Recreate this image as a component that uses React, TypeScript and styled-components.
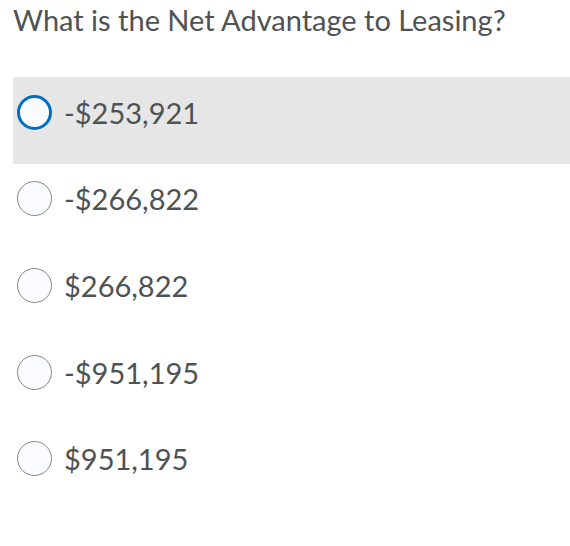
import React from "react";
import styled, { createGlobalStyle } from "styled-components";

const GlobalStyle = createGlobalStyle`
  html, body {
    margin: 0;
    padding: 0;
    background: #ffffff;
  }
  body {
    font-family: Lato, "Noto Sans", sans-serif;
    color: #494c4e;
  }
`;

const Page = styled.div`
  width: 570px;
  height: 546px;
  padding-left: 13px;
  box-sizing: border-box;
`;

const Question = styled.h1`
  margin: 0;
  font-size: 29px;
  font-weight: 400;
  line-height: 40px;
  color: #4f5254;
  white-space: nowrap;
`;

const Choices = styled.div`
  margin-top: 37px;
  display: flex;
  flex-direction: column;
`;

const Choice = styled.label<{ $active?: boolean }>`
  display: flex;
  align-items: center;
  gap: 12px;
  height: 86.6px;
  box-sizing: border-box;
  padding: 0 0 16px 4px;
  background: ${({ $active }) => ($active ? "#e6e6e6" : "transparent")};
  cursor: pointer;
`;

const Radio = styled.span<{ $focused?: boolean }>`
  width: 35px;
  height: 35px;
  box-sizing: border-box;
  border-radius: 50%;
  background: #f9fbff;
  border: ${({ $focused }) =>
    $focused ? "3px solid #006fbf" : "1px solid #868686"};
  flex-shrink: 0;
`;

const Amount = styled.span`
  font-size: 29px;
  font-weight: 400;
  line-height: 1;
  color: #4f5254;
`;

const answers = ["-$253,921", "-$266,822", "$266,822", "-$951,195", "$951,195"];

export default function App() {
  return (
    <>
      <GlobalStyle />
      <Page>
        <Question>What is the Net Advantage to Leasing?</Question>
        <Choices>
          {answers.map((a, i) => (
            <Choice key={a} $active={i === 0}>
              <Radio $focused={i === 0} />
              <Amount>{a}</Amount>
            </Choice>
          ))}
        </Choices>
      </Page>
    </>
  );
}
